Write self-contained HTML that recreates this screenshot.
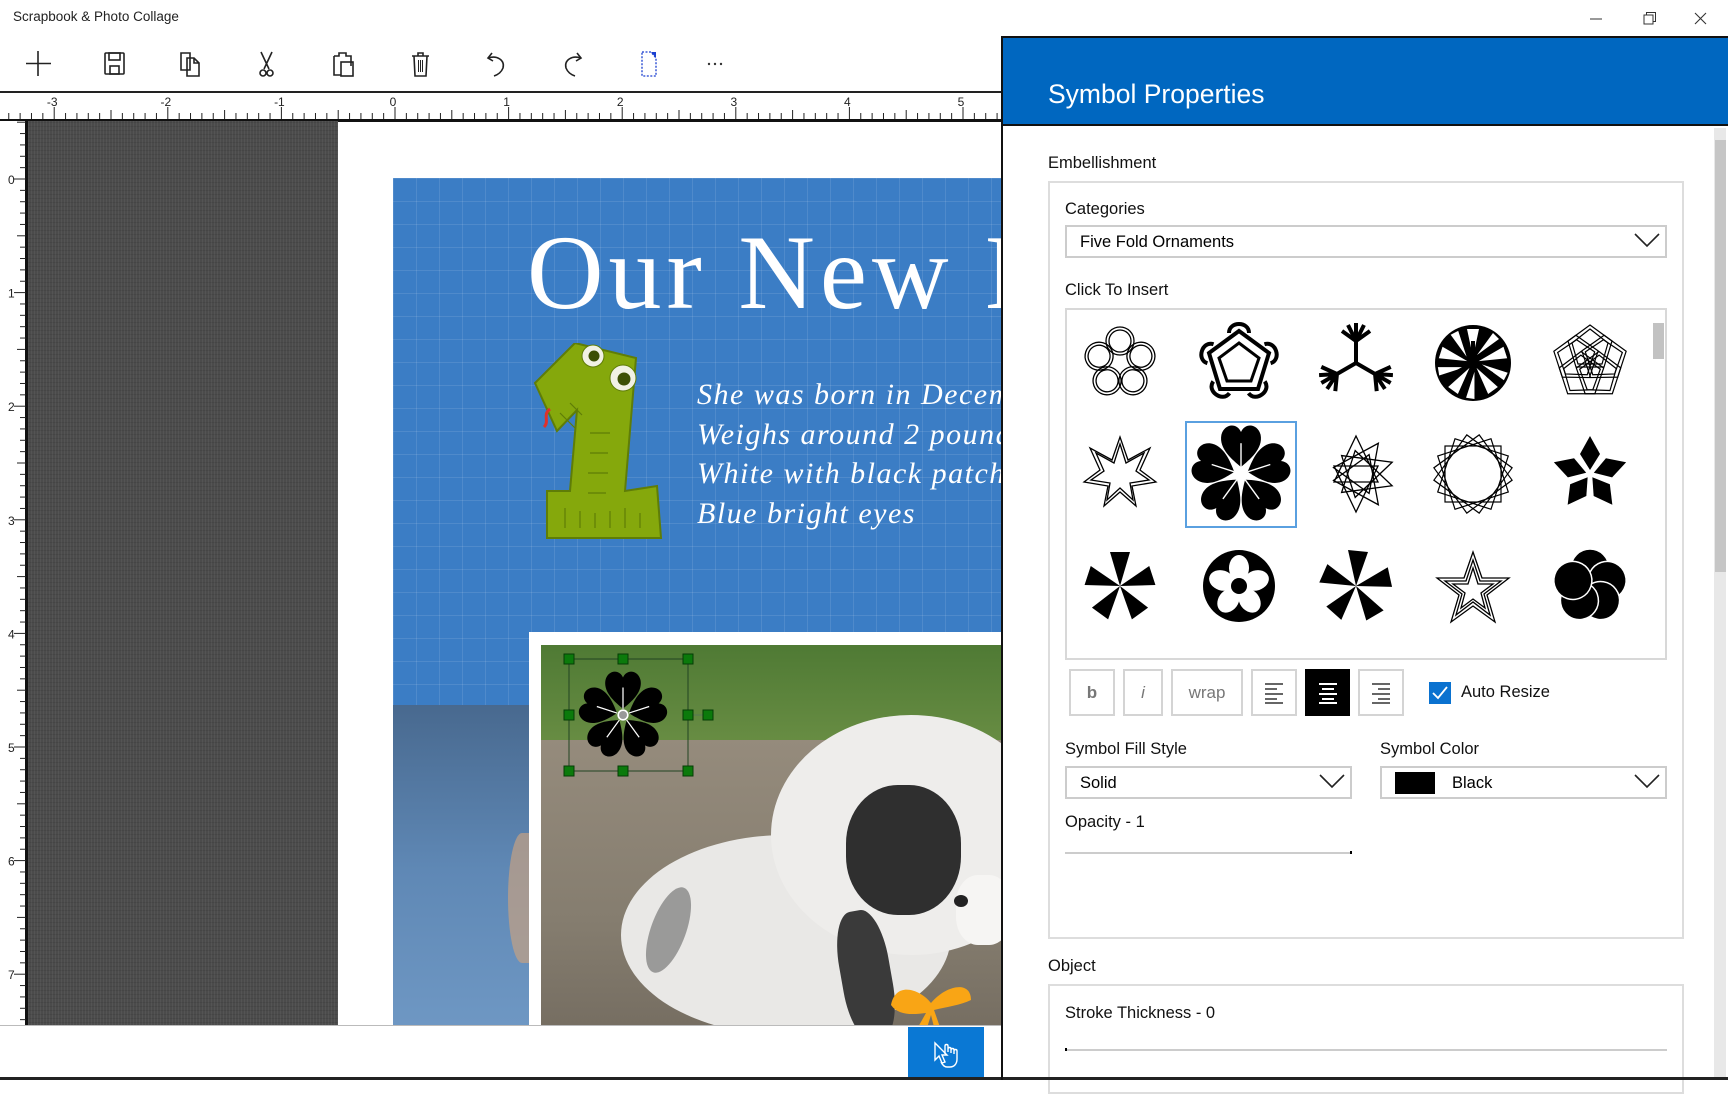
<!DOCTYPE html>
<html><head><meta charset="utf-8"><style>
*{margin:0;padding:0;box-sizing:border-box}
body{width:1728px;height:1080px;overflow:hidden;background:#fff;font-family:"Liberation Sans",sans-serif;color:#000;position:relative}
.a{position:absolute}
.lbl{position:absolute;font-size:16.5px;color:#111}
.dd{position:absolute;border:2px solid #ccc;background:#fff;height:33px}
.dd span{position:absolute;left:13px;top:6px;font-size:16.5px}
.dd svg{position:absolute;right:5px;top:4px}
.btn{position:absolute;top:669px;height:47px;border:2px solid #d4d4d4;background:#fff;color:#777;font-size:17px;text-align:center;line-height:43px}
</style></head><body>

<div class="a" style="left:13px;top:9px;font-size:13.5px;color:#222">Scrapbook &amp; Photo Collage</div>
<svg class="a" style="left:1580px;top:8px" width="140" height="22">
 <line x1="10" y1="11" x2="22" y2="11" stroke="#333" stroke-width="1"/>
 <rect x="64" y="7" width="9" height="9" fill="none" stroke="#333"/><path d="M66.5 7V4.5H75.5V13.5H73" fill="none" stroke="#333"/>
 <path d="M115 5L126 16M126 5L115 16" stroke="#333" stroke-width="1.1"/>
</svg>

<svg class="a" style="left:0;top:40px" width="1000" height="46" fill="none" stroke="#222" stroke-width="1.6">
 <path d="M38 11V36M26 23.5H51"/>
 <g transform="translate(105,13)"><rect x="0" y="0" width="19" height="21" rx="1"/><rect x="4" y="0" width="11" height="7"/><rect x="5" y="13" width="9" height="8"/></g>
 <g transform="translate(181,13)"><path d="M0 0H9V17H0Z"/><path d="M6 5H13L18 10V23H6Z"/><path d="M13 5V10H18"/></g>
 <g transform="translate(259,12)"><path d="M2 0L10 17M13 0L5 17"/><circle cx="4" cy="21" r="3"/><circle cx="11" cy="21" r="3"/></g>
 <g transform="translate(334,12)"><path d="M0 4H5V1H12V4H17V14"/><path d="M0 4V23H7"/><rect x="7" y="10" width="12" height="14"/></g>
 <g transform="translate(412,12)"><path d="M0 4H17M6 4V1H11V4"/><path d="M2 4L3 24H14L15 4"/><path d="M6.5 8V20M8.5 8V20M10.5 8V20" stroke-width="1"/></g>
 <g transform="translate(487,12)"><path d="M5 1L1 6L6 9"/><path d="M1 6C10 3 18 8 16 16C14 21 10 23 7 24"/></g>
 <g transform="translate(564,12)"><path d="M13 1L17 6L12 9"/><path d="M17 6C8 3 0 8 2 16C4 21 8 23 11 24"/></g>
 <g transform="translate(642,12)" stroke="#1a3fd0" stroke-width="1.3" stroke-dasharray="2 1.5"><path d="M0 0H9L14 6V24H0Z"/></g>
 <path d="M651 12L656 18V12Z" fill="#1a3fd0" stroke="none"/>
 <g fill="#333" stroke="none"><circle cx="709" cy="24" r="1.2"/><circle cx="715" cy="24" r="1.2"/><circle cx="721" cy="24" r="1.2"/></g>
</svg>

<div class="a" style="left:0;top:91px;width:1003px;height:936px;overflow:hidden;border-top:2px solid #222">
 <svg class="a" style="left:0;top:0" width="1003" height="29">
  <rect width="1003" height="29" fill="#fff"/>
  <line x1="0" y1="27.5" x2="1003" y2="27.5" stroke="#111" stroke-width="3"/>
  <g id="tt"></g>
 </svg>
 <div class="a" style="left:0;top:28px;width:28px;height:910px;background:#fff;border-right:3px solid #111"></div>
 <svg class="a" style="left:0;top:28px" width="28" height="910" id="lr"></svg>
 <div class="a" style="left:28px;top:28px;width:310px;height:910px;background:#4b4b4b;background-image:repeating-linear-gradient(90deg,rgba(255,255,255,.05) 0 1px,transparent 1px 3px),repeating-linear-gradient(0deg,rgba(0,0,0,.08) 0 1px,transparent 1px 4px)"></div>
 <div class="a" style="left:393px;top:85px;width:620px;height:530px;background:#3b7dc5;background-image:linear-gradient(rgba(255,255,255,.10) 1px,transparent 1px),linear-gradient(90deg,rgba(255,255,255,.10) 1px,transparent 1px);background-size:23px 23px"></div>
 <div class="a" style="left:393px;top:612px;width:140px;height:330px;background:linear-gradient(#48698f,#5f88b5 50%,#6f98c4)"></div>
 <div class="a" style="left:508px;top:740px;width:28px;height:130px;background:#c4a183;border-radius:50% 0 0 50%;opacity:.7"></div>
 <div class="a" style="left:529px;top:539px;width:480px;height:400px;background:#fff"></div>
 <div class="a" style="left:541px;top:552px;width:470px;height:390px;overflow:hidden;background:#8b8275">
  <div class="a" style="left:0;top:0;width:470px;height:110px;background:linear-gradient(#4f7a34,#6b8f45)"></div>
  <div class="a" style="left:0;top:95px;width:470px;height:300px;background:linear-gradient(#958b7c,#857d6f 60%,#746c60)"></div>
  <div class="a" style="left:80px;top:190px;width:330px;height:200px;background:#e9e8e6;border-radius:50%"></div>
  <div class="a" style="left:230px;top:70px;width:280px;height:240px;background:#eeedeb;border-radius:50%"></div>
  <div class="a" style="left:305px;top:140px;width:115px;height:130px;background:#2f2f2f;border-radius:45%"></div>
  <div class="a" style="left:300px;top:265px;width:50px;height:130px;background:#3a3a3a;border-radius:40%;transform:rotate(-10deg)"></div>
  <div class="a" style="left:110px;top:240px;width:35px;height:90px;background:#666;border-radius:50%;transform:rotate(20deg);opacity:.6"></div>
  <div class="a" style="left:415px;top:230px;width:55px;height:70px;background:#f6f5f3;border-radius:40%"></div>
  <div class="a" style="left:413px;top:250px;width:14px;height:12px;background:#222;border-radius:50%"></div>
  <svg class="a" style="left:345px;top:330px" width="90" height="80"><path d="M5 30C10 5 35 15 45 28C60 10 85 5 85 25C75 30 60 32 48 35L62 75L50 60L45 40L35 72L22 70L40 38C25 40 12 40 5 30Z" fill="#f9a515"/></svg>
 </div>
 <div class="a" style="left:527px;top:127px;font-family:'Liberation Serif',serif;font-size:106px;color:#fff;letter-spacing:5px;white-space:nowrap;line-height:1">Our New B</div>
 <div class="a" style="left:697px;top:282px;font-family:'Liberation Serif',serif;font-style:italic;font-size:30px;color:#fff;line-height:39.5px;letter-spacing:1.5px;white-space:nowrap">She was born in December<br>Weighs around 2 pounds<br>White with black patches<br>Blue bright eyes</div>
 <svg class="a" style="left:530px;top:250px" width="150" height="220">
  <path d="M6 135L46 95L107 110L96 243L128 238L132 290L18 290L18 243L41 243L48 162L28 183Z" transform="translate(-1,-95)" fill="#85a80c" stroke="#5f7d07" stroke-width="2"/>
  <g stroke="#5f7d07" stroke-width="1.2"><path d="M60 90H80M60 110H78M58 130H78M58 150H76M30 70L45 85M40 60L52 72"/><path d="M35 185V165M50 185V168M65 185V170M80 185V168M95 185V165M110 185V170"/></g>
  <g transform="translate(0,-95)"><circle cx="63" cy="108" r="11" fill="#f1f1e4" stroke="#5f7d07"/><circle cx="64" cy="108" r="5.5" fill="#3d5005"/><circle cx="93" cy="130" r="13" fill="#f1f1e4" stroke="#5f7d07"/><circle cx="94" cy="131" r="6.5" fill="#3d5005"/></g>
  <path d="M20 66C12 72 20 78 14 84" fill="none" stroke="#e0302a" stroke-width="3"/>
 </svg>
 <svg class="a" style="left:560px;top:556px" width="160" height="130">
  <path d="M9 10H128V122H9Z" fill="none" stroke="#224422" stroke-width="1"/>
  <line x1="128" y1="66" x2="148" y2="66" stroke="#557755"/>
  <g transform="translate(63,66) scale(1.25)"><use href="#heart5"/></g>
  <circle cx="63" cy="66" r="4" fill="#999"/>
  <g fill="#0b7a0b" stroke="#053d05"><rect x="4" y="5" width="10" height="10"/><rect x="58" y="5" width="10" height="10"/><rect x="123" y="5" width="10" height="10"/><rect x="4" y="61" width="10" height="10"/><rect x="123" y="61" width="10" height="10"/><rect x="143" y="61" width="10" height="10"/><rect x="4" y="117" width="10" height="10"/><rect x="58" y="117" width="10" height="10"/><rect x="123" y="117" width="10" height="10"/></g>
 </svg>
</div>
<div class="a" style="left:0;top:1025px;width:1003px;height:55px;background:#fff;border-top:1px solid #bbb"></div>
<div class="a" style="left:908px;top:1027px;width:76px;height:53px;background:#0a78d4"></div>
<svg class="a" style="left:930px;top:1040px" width="34" height="30" fill="none" stroke="#fff" stroke-width="1.4"><path d="M5 3L5 20L9 16L12 23L15 22L12 15H17Z"/><path d="M15 14V6C15 4 18 4 18 6V12M18 9C18 7 21 7 21 9V13M21 10C21 8 24 8 24 10V14M24 11C24 9 27 9 27 11V19C27 24 24 27 20 27H17C14 27 12 24 11 22"/></svg>
<div class="a" style="left:0;top:1077px;width:1003px;height:3px;background:#222"></div>

<div class="a" style="left:1001px;top:36px;width:727px;height:1044px;background:#fff;border-left:2px solid #111"></div>
<div class="a" style="left:1001px;top:36px;width:727px;height:90px;background:#0067c0;border-top:2px solid #111;border-bottom:2px solid #111;border-left:2px solid #111"></div>
<div class="a" style="left:1048px;top:79px;font-size:26.5px;color:#fff">Symbol Properties</div>
<div class="a" style="left:1714px;top:128px;width:12px;height:950px;background:#e8e8e8"></div>
<div class="a" style="left:1715px;top:140px;width:11px;height:432px;background:#c6c6c6"></div>

<div class="lbl" style="left:1048px;top:154px">Embellishment</div>
<div class="a" style="left:1048px;top:181px;width:636px;height:758px;border:2px solid #ddd"></div>
<div class="lbl" style="left:1065px;top:200px">Categories</div>
<div class="dd" style="left:1065px;top:225px;width:602px"><span>Five Fold Ornaments</span><svg width="26" height="20"><path d="M1 3L13 15L25 3" fill="none" stroke="#222" stroke-width="1.6"/></svg></div>
<div class="lbl" style="left:1065px;top:281px">Click To Insert</div>
<div class="a" style="left:1065px;top:308px;width:602px;height:352px;border:2px solid #d8d8d8"></div>
<div class="a" style="left:1653px;top:323px;width:11px;height:36px;background:#c2c2c2"></div>

<svg class="a" style="left:1065px;top:308px" width="590" height="350">
 <defs>
  <g id="heart5"><g id="hp"><path d="M0 -5C-6 -10 -16 -18 -14 -28C-12 -36 -3 -37 0 -30C3 -37 12 -36 14 -28C16 -18 6 -10 0 -5Z" fill="#000"/></g>
   <use href="#hp" transform="rotate(72)"/><use href="#hp" transform="rotate(144)"/><use href="#hp" transform="rotate(216)"/><use href="#hp" transform="rotate(288)"/>
   <g stroke="#fff" stroke-width="1"><path d="M0 -5V-22"/><path d="M0 -5V-22" transform="rotate(72)"/><path d="M0 -5V-22" transform="rotate(144)"/><path d="M0 -5V-22" transform="rotate(216)"/><path d="M0 -5V-22" transform="rotate(288)"/></g>
   <circle r="4.5" fill="#fff"/></g>
  <g id="kite"><path d="M0 -4L-10 -20L0 -38L10 -20Z" fill="#000"/></g>
  <g id="tri"><path d="M0 0L-8 -36L12 -34Z" fill="#000"/></g>
 </defs>
 <g transform="translate(55,55)" fill="none" stroke="#000" stroke-width="1.3">
  <g id="rg"><circle cx="0" cy="-22" r="14"/><circle cx="0" cy="-22" r="11"/></g>
  <use href="#rg" transform="rotate(72)"/><use href="#rg" transform="rotate(144)"/><use href="#rg" transform="rotate(216)"/><use href="#rg" transform="rotate(288)"/>
 </g>
 <g transform="translate(174,55)" fill="none" stroke="#000" stroke-width="4">
  <path d="M0 -32L30 -10L19 26L-19 26L-30 -10Z"/><path d="M0 -20L20 -5L12 18L-12 18L-20 -5Z" stroke-width="3"/>
  <g id="lp"><path d="M-10 -30C-10 -42 10 -42 10 -30" /></g>
  <use href="#lp" transform="rotate(72)"/><use href="#lp" transform="rotate(144)"/><use href="#lp" transform="rotate(216)"/><use href="#lp" transform="rotate(288)"/>
 </g>
 <g transform="translate(291,55)" stroke="#000">
  <g id="br"><path d="M0 0V-22M0 -22L-8 -38M0 -22L8 -38M0 -22L0 -40M0 -22L-14 -32M0 -22L14 -32" stroke-width="4"/></g>
  <use href="#br" transform="rotate(120)"/><use href="#br" transform="rotate(240)"/>
 </g>
 <g transform="translate(408,55)">
  <ellipse rx="38" ry="38" fill="#000"/>
  <g fill="#fff"><g id="wg"><path d="M0 -6L-6 -34L6 -34Z"/><path d="M4 -8L20 -30L26 -24Z"/></g>
  <use href="#wg" transform="rotate(72)"/><use href="#wg" transform="rotate(144)"/><use href="#wg" transform="rotate(216)"/><use href="#wg" transform="rotate(288)"/></g>
  <path d="M0 0V-22M0 0L19 11M0 0L-19 11" stroke="#000" stroke-width="4"/>
 </g>
 <g transform="translate(525,55)" fill="none" stroke="#000" stroke-width="1.2">
  <g id="pg"><path d="M0 -34L22 -18L14 8L-14 8L-22 -18Z" transform="translate(0,-4)"/><path d="M0 -30L18 -16L12 5L-12 5L-18 -16Z" transform="translate(0,-4)"/></g>
  <use href="#pg" transform="rotate(72)"/><use href="#pg" transform="rotate(144)"/><use href="#pg" transform="rotate(216)"/><use href="#pg" transform="rotate(288)"/>
 </g>
 <g transform="translate(55,166)" fill="none" stroke="#000" stroke-width="1.3">
  <path d="M0 -37L8 -14L30 -26L20 -4L36 8L12 12L16 32L0 18L-16 32L-12 12L-36 8L-20 -4L-30 -26L-8 -14Z"/>
  <path d="M0 -30L6 -11L24 -21L16 -3L29 6L10 9L13 26L0 14L-13 26L-10 9L-29 6L-16 -3L-24 -21L-6 -11Z"/>
 </g>
 <rect x="121" y="114" width="110" height="105" fill="none" stroke="#5aa0e0" stroke-width="2"/>
 <g transform="translate(176,166) scale(1.4)"><use href="#heart5"/></g>
 <g transform="translate(291,166)" fill="none" stroke="#000" stroke-width="1.3">
  <path d="M0 -38L22 8L-22 8Z M0 38L22 -8L-22 -8Z" />
  <path d="M0 -38L22 8L-22 8Z" transform="rotate(36)"/><path d="M0 -38L22 8L-22 8Z" transform="rotate(72)"/><path d="M0 -38L22 8L-22 8Z" transform="rotate(108)"/><path d="M0 -38L22 8L-22 8Z" transform="rotate(144)"/>
 </g>
 <g transform="translate(408,166)" fill="none" stroke="#000" stroke-width="1.2">
  <rect x="-28" y="-28" width="56" height="56"/><rect x="-28" y="-28" width="56" height="56" transform="rotate(18)"/><rect x="-28" y="-28" width="56" height="56" transform="rotate(36)"/><rect x="-28" y="-28" width="56" height="56" transform="rotate(54)"/><rect x="-28" y="-28" width="56" height="56" transform="rotate(72)"/>
 </g>
 <g transform="translate(525,166)"><use href="#kite"/><use href="#kite" transform="rotate(72)"/><use href="#kite" transform="rotate(144)"/><use href="#kite" transform="rotate(216)"/><use href="#kite" transform="rotate(288)"/></g>
 <g transform="translate(55,278)" fill="#000"><g id="bt"><path d="M0 0L-10 -34L10 -34Z"/></g><use href="#bt" transform="rotate(72)"/><use href="#bt" transform="rotate(144)"/><use href="#bt" transform="rotate(216)"/><use href="#bt" transform="rotate(288)"/></g>
 <g transform="translate(174,278)">
  <circle r="36" fill="#000"/>
  <g fill="#fff"><ellipse cx="0" cy="-18" rx="10" ry="13"/><ellipse cx="0" cy="-18" rx="10" ry="13" transform="rotate(72)"/><ellipse cx="0" cy="-18" rx="10" ry="13" transform="rotate(144)"/><ellipse cx="0" cy="-18" rx="10" ry="13" transform="rotate(216)"/><ellipse cx="0" cy="-18" rx="10" ry="13" transform="rotate(288)"/></g>
  <circle r="8" fill="#000"/>
 </g>
 <g transform="translate(291,278)"><use href="#tri"/><use href="#tri" transform="rotate(72)"/><use href="#tri" transform="rotate(144)"/><use href="#tri" transform="rotate(216)"/><use href="#tri" transform="rotate(288)"/></g>
 <g transform="translate(408,282)" fill="none" stroke="#000" stroke-width="1.3">
  <path d="M0 -38L9 -12L36 -12L14 5L22 32L0 16L-22 32L-14 5L-36 -12L-9 -12Z"/>
  <path d="M0 -30L7 -9L28 -9L11 4L17 25L0 12L-17 25L-11 4L-28 -9L-7 -9Z"/>
  <path d="M0 -22L5 -6L20 -6L8 3L12 18L0 9L-12 18L-8 3L-20 -6L-5 -6Z"/>
 </g>
 <g transform="translate(525,278)" fill="#000" stroke="#fff" stroke-width="1.5"><g id="cc"><circle cx="0" cy="-18" r="19"/></g><use href="#cc" transform="rotate(72)"/><use href="#cc" transform="rotate(144)"/><use href="#cc" transform="rotate(216)"/><use href="#cc" transform="rotate(288)"/></g>
</svg>

<div class="btn" style="left:1069px;width:46px;font-weight:bold">b</div>
<div class="btn" style="left:1123px;width:40px;font-style:italic">i</div>
<div class="btn" style="left:1171px;width:72px">wrap</div>
<div class="btn" style="left:1251px;width:46px"><svg width="20" height="22" style="margin-top:11px" stroke="#666" stroke-width="2"><path d="M1 2H19M1 7H13M1 12H19M1 17H13M1 21H19"/></svg></div>
<div class="btn" style="left:1305px;width:45px;background:#000;border-color:#000"><svg width="20" height="22" style="margin-top:11px" stroke="#fff" stroke-width="2"><path d="M1 2H19M4 7H16M1 12H19M4 17H16M1 21H19"/></svg></div>
<div class="btn" style="left:1358px;width:46px"><svg width="20" height="22" style="margin-top:11px" stroke="#666" stroke-width="2"><path d="M1 2H19M7 7H19M1 12H19M7 17H19M1 21H19"/></svg></div>
<div class="a" style="left:1429px;top:682px;width:22px;height:22px;background:#0a72d0"></div>
<svg class="a" style="left:1429px;top:682px" width="22" height="22"><path d="M4 11L9 16L18 5" fill="none" stroke="#fff" stroke-width="1.8"/></svg>
<div class="lbl" style="left:1461px;top:683px">Auto Resize</div>

<div class="lbl" style="left:1065px;top:740px">Symbol Fill Style</div>
<div class="lbl" style="left:1380px;top:740px">Symbol Color</div>
<div class="dd" style="left:1065px;top:766px;width:287px"><span>Solid</span><svg width="26" height="20"><path d="M1 3L13 15L25 3" fill="none" stroke="#222" stroke-width="1.6"/></svg></div>
<div class="dd" style="left:1380px;top:766px;width:287px"><div class="a" style="left:13px;top:4px;width:40px;height:22px;background:#000"></div><span style="left:70px">Black</span><svg width="26" height="20"><path d="M1 3L13 15L25 3" fill="none" stroke="#222" stroke-width="1.6"/></svg></div>
<div class="lbl" style="left:1065px;top:813px">Opacity - 1</div>
<div class="a" style="left:1065px;top:852px;width:286px;height:2px;background:#ccc"></div>
<div class="a" style="left:1350px;top:851px;width:2px;height:3px;background:#000"></div>

<div class="lbl" style="left:1048px;top:957px">Object</div>
<div class="a" style="left:1048px;top:984px;width:636px;height:110px;border:2px solid #ddd"></div>
<div class="lbl" style="left:1065px;top:1004px">Stroke Thickness - 0</div>
<div class="a" style="left:1065px;top:1049px;width:602px;height:2px;background:#ccc"></div>
<div class="a" style="left:1065px;top:1048px;width:2px;height:3px;background:#000"></div>
<div class="a" style="left:1003px;top:1077px;width:725px;height:3px;background:#222"></div>

<script>
(function(){
 var t=document.getElementById('tt');
 var s='';
 for(var i=-40;i<=60;i++){var x=395+i*11.36;if(x<0||x>1003)continue;var m=((i%10)+10)%10;var h=m==0?12:(m==5?9:6);s+='<line x1="'+x+'" y1="'+(26-h)+'" x2="'+x+'" y2="26" stroke="#222"/>';if(m==0){s+='<text x="'+(x-2)+'" y="13" font-size="12" text-anchor="middle" font-family="Liberation Sans" fill="#222">'+(i/10)+'</text>';}}
 t.innerHTML=s;
 var l=document.getElementById('lr');s='';
 for(var j=-10;j<=80;j++){var y=58+j*11.36;if(y<0||y>910)continue;var n=((j%10)+10)%10;var w=n==0?12:(n==5?9:6);s+='<line x1="'+(26-w)+'" y1="'+y+'" x2="26" y2="'+y+'" stroke="#222"/>';if(n==0){s+='<text x="8" y="'+(y+5)+'" font-size="12" font-family="Liberation Sans" fill="#222">'+(j/10)+'</text>';}}
 l.innerHTML=s;
})();
</script>
</body></html>
